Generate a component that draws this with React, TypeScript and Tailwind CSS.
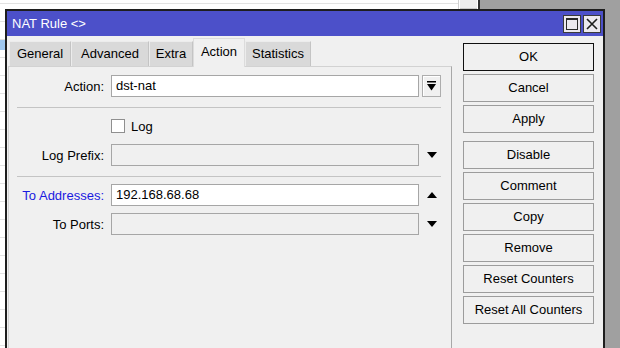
import React from "react";

function TriDown() {
  return (
    <svg width="10" height="6" viewBox="0 0 10 6">
      <path d="M0 0H10L5 6Z" fill="#000" />
    </svg>
  );
}

function TriUp() {
  return (
    <svg width="10" height="6" viewBox="0 0 10 6">
      <path d="M0 6H10L5 0Z" fill="#000" />
    </svg>
  );
}

function DropIcon() {
  return (
    <svg width="9" height="10" viewBox="0 0 9 10">
      <rect x="0" y="0" width="9" height="1.5" fill="#000" />
      <path d="M0 3H9L4.5 9.5Z" fill="#000" />
    </svg>
  );
}

const tabs: { name: string; w: string; active?: boolean }[] = [
  { name: "General", w: "w-[62px]" },
  { name: "Advanced", w: "w-[78px]" },
  { name: "Extra", w: "w-[44px]" },
  { name: "Action", w: "w-[52px]", active: true },
  { name: "Statistics", w: "w-[66px]" },
];

const buttons = [
  "OK",
  "Cancel",
  "Apply",
  "Disable",
  "Comment",
  "Copy",
  "Remove",
  "Reset Counters",
  "Reset All Counters",
];

function Row({
  label,
  blue,
  children,
  className,
}: {
  label: string;
  blue?: boolean;
  children: React.ReactNode;
  className?: string;
}) {
  return (
    <div className={"flex items-center h-[22px] " + (className ?? "")}>
      <div
        className={
          "w-[95px] text-right text-[13px] leading-none whitespace-nowrap " +
          (blue ? "text-[#1a1ae0]" : "text-black")
        }
      >
        {label}
      </div>
      {children}
    </div>
  );
}

export default function App() {
  return (
    <div className="relative w-[620px] h-[348px] overflow-hidden bg-[#a0a0a0] font-['Liberation_Sans',Arial,sans-serif]">
      {/* background list window */}
      <div className="flex h-full">
        <div className="w-[458px] bg-white flex flex-col">
          <div className="h-[4px] border-b border-[#e2e2e2] shrink-0" />
          <div className="h-[18px] border-b border-[#e2e2e2] shrink-0" />
          <div className="h-[18px] border-b border-[#e2e2e2] shrink-0" />
          <div className="h-[10px] bg-[#9fc7ee] shrink-0" />
          <div className="h-[8px] border-b border-[#e2e2e2] shrink-0" />
          {Array.from({ length: 16 }).map((_, i) => (
            <div key={i} className="h-[18px] border-b border-[#e2e2e2] shrink-0" />
          ))}
        </div>
        <div className="w-[20px] bg-white border-l border-[#d0d0d0] flex flex-col">
          <div className="h-[9px] mx-[1px] bg-[#ececec] border-b border-[#c8c8c8]" />
        </div>
        <div className="w-[2px] bg-[#303030]" />
      </div>

      {/* dialog window */}
      <div className="absolute left-[5px] top-[9px] w-[600px] h-[360px] border-2 border-[#1e1e1e] bg-[#f0f0f0] flex flex-col">
        {/* title bar */}
        <div className="h-[25px] bg-[#4c50c9] flex items-center justify-between pl-[5px] pr-[2px] shrink-0">
          <span className="text-white text-[13px] leading-none">NAT Rule &lt;&gt;</span>
          <div className="flex gap-[2px]">
            <div className="w-[18px] h-[18px] bg-[#ece9ef] border border-[#3a3a3a] flex items-center justify-center">
              <svg width="12" height="12" viewBox="0 0 12 12">
                <rect x="0.5" y="0.5" width="11" height="11" fill="none" stroke="#2a2a2a" strokeWidth="1" />
                <rect x="0.5" y="0.5" width="11" height="1.5" fill="#2a2a2a" />
              </svg>
            </div>
            <div className="w-[18px] h-[18px] bg-[#ece9ef] border border-[#3a3a3a] flex items-center justify-center">
              <svg width="12" height="12" viewBox="0 0 12 12">
                <path d="M1 1L11 11M11 1L1 11" stroke="#1e1e1e" strokeWidth="1.6" />
              </svg>
            </div>
          </div>
        </div>

        {/* body */}
        <div className="flex flex-1 pl-[1px]">
          {/* left: tabs + panel */}
          <div className="w-[444px] flex flex-col pt-[2px]">
            <div className="flex items-end h-[28px] pl-[1px] relative z-10">
              {tabs.map((t) =>
                t.active ? (
                  <div
                    key={t.name}
                    className={
                      t.w +
                      " h-[29px] -mb-[1px] bg-[#f0f0f0] border-t border-x border-[#dcdcdc] flex items-center justify-center text-[13px] text-black pb-[2px]"
                    }
                  >
                    {t.name}
                  </div>
                ) : (
                  <div
                    key={t.name}
                    className={
                      t.w +
                      " h-[25px] bg-[#d9d9d9] border-t border-l border-[#ececec] border-r border-r-[#c4c4c4] flex items-center justify-center text-[13px] text-black"
                    }
                  >
                    {t.name}
                  </div>
                )
              )}
            </div>
            <div className="flex-1 border border-[#d2d2d2] border-r-[#a8a8a8] bg-[#f0f0f0] flex flex-col">
              <Row label="Action:" className="mt-[8px]">
                <div className="ml-[7px] w-[308px] h-[22px] bg-white border border-[#a6a6a6] flex items-center pl-[4px] text-[13px] text-black">
                  dst-nat
                </div>
                <div className="ml-[3px] w-[19px] h-[22px] bg-[#f0f0f0] border border-[#adadad] shadow-[inset_1px_1px_0_#ffffff] flex items-center justify-center">
                  <DropIcon />
                </div>
              </Row>

              <div className="mt-[10px] ml-[8px] w-[424px] h-[1px] bg-[#c4c4c4]" />

              <div className="flex items-center h-[14px] mt-[11px]">
                <div className="ml-[102px] w-[14px] h-[14px] bg-white border border-[#8f8f8f]" />
                <span className="ml-[6px] text-[13px] leading-none text-black">Log</span>
              </div>

              <Row label="Log Prefix:" className="mt-[11px]">
                <div className="ml-[7px] w-[308px] h-[22px] bg-[#f0f0f0] border border-[#a6a6a6]" />
                <div className="ml-[3px] w-[19px] h-[22px] flex items-center justify-center">
                  <TriDown />
                </div>
              </Row>

              <div className="mt-[10px] ml-[8px] w-[424px] h-[1px] bg-[#c4c4c4]" />

              <Row label="To Addresses:" blue className="mt-[7px]">
                <div className="ml-[7px] w-[308px] h-[22px] bg-white border border-[#a6a6a6] flex items-center pl-[4px] text-[13px] text-black">
                  192.168.68.68
                </div>
                <div className="ml-[3px] w-[19px] h-[22px] flex items-center justify-center">
                  <TriUp />
                </div>
              </Row>

              <Row label="To Ports:" className="mt-[7px]">
                <div className="ml-[7px] w-[308px] h-[22px] bg-[#f0f0f0] border border-[#a6a6a6]" />
                <div className="ml-[3px] w-[19px] h-[22px] flex items-center justify-center">
                  <TriDown />
                </div>
              </Row>
            </div>
          </div>

          {/* right: buttons */}
          <div className="ml-[11px] w-[131px] flex flex-col pt-[7px]">
            {buttons.map((b, i) => (
              <div
                key={b}
                className={
                  "h-[28px] flex items-center justify-center text-[13px] text-black bg-[#f0f0f0] whitespace-nowrap " +
                  (i === 0 ? "border border-[#101010] " : "border border-[#9c9c9c] ") +
                  (i === 0 ? "" : i === 3 ? "mt-[8px]" : "mt-[3px]")
                }
              >
                {b}
              </div>
            ))}
          </div>
        </div>
      </div>
    </div>
  );
}
